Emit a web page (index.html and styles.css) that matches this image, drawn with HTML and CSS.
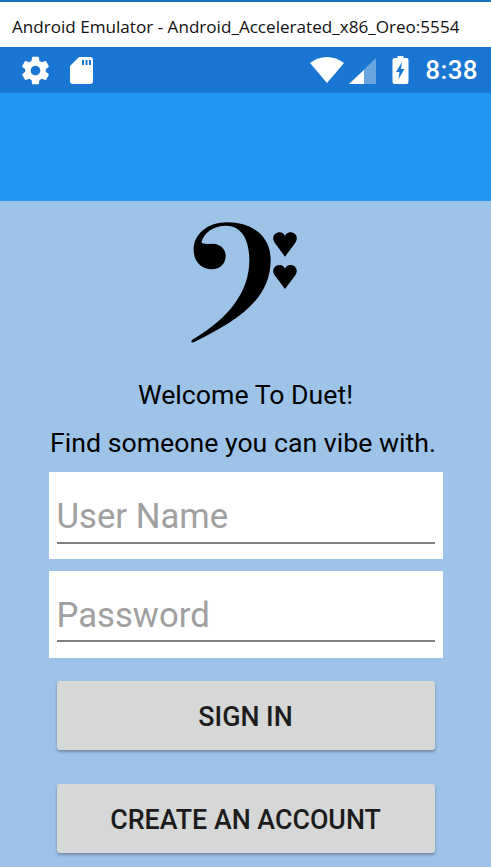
FILE: index.html
```html
<!DOCTYPE html>
<html lang="en">
<head>
<meta charset="utf-8">
<title>Duet</title>
<link rel="stylesheet" href="styles.css">
</head>
<body>
<div class="titlebar">Android Emulator - Android_Accelerated_x86_Oreo:5554</div>
<div class="statusbar">
  <svg class="ic-gear" viewBox="0 0 24 24"><path fill="#fff" d="M19.43 12.98c.04-.32.07-.64.07-.98s-.03-.66-.07-.98l2.11-1.65c.19-.15.24-.42.12-.64l-2-3.46c-.12-.22-.39-.3-.61-.22l-2.49 1c-.52-.4-1.08-.73-1.69-.98l-.38-2.65C14.46 2.18 14.25 2 14 2h-4c-.25 0-.46.18-.49.42l-.38 2.65c-.61.25-1.17.59-1.69.98l-2.49-1c-.23-.09-.49 0-.61.22l-2 3.46c-.13.22-.07.49.12.64l2.11 1.65c-.04.32-.07.65-.07.98s.03.66.07.98l-2.11 1.65c-.19.15-.24.42-.12.64l2 3.46c.12.22.39.3.61.22l2.49-1c.52.4 1.08.73 1.69.98l.38 2.65c.03.24.24.42.49.42h4c.25 0 .46-.18.49-.42l.38-2.65c.61-.25 1.17-.59 1.69-.98l2.49 1c.23.09.49 0 .61-.22l2-3.46c.12-.22.07-.49-.12-.64l-2.11-1.65zM12 15.500c-1.93 0-3.500-1.570-3.500-3.500s1.570-3.500 3.500-3.500 3.500 1.570 3.500 3.500-1.570 3.500-3.500 3.500z"/></svg>
  <svg class="ic-sd" viewBox="0 0 23 27"><path fill="#fff" fill-rule="evenodd" d="M9 0h11a3 3 0 0 1 3 3v21a3 3 0 0 1-3 3H3a3 3 0 0 1-3-3V9zM12 3v5h2V3zM15.500 3v5h2V3zM19 3v5h2V3z"/></svg>
  <span class="spacer"></span>
  <svg class="ic-wifi" viewBox="0 0 34 26"><path fill="#fff" d="M17 26 0 6C5 2 11 0 17 0s12 2 17 6z"/></svg>
  <svg class="ic-signal" viewBox="0 0 27 26"><path fill="#fff" fill-opacity=".35" d="M27 0v26H0z"/><path fill="#fff" d="M15 12v14H0z"/></svg>
  <svg class="ic-batt" viewBox="0 0 16 28"><path fill="#fff" fill-rule="evenodd" d="M5 0h6v2h3a2 2 0 0 1 2 2v22a2 2 0 0 1-2 2H2a2 2 0 0 1-2-2V4a2 2 0 0 1 2-2h3zM9.500 6 3.500 16h3.500l-1 7 6-10H8.500z"/></svg>
  <span class="clock">8:38</span>
</div>
<div class="toolbar"></div>
<main class="content">
  <svg class="logo" viewBox="0 0 450 450">
    <path d="M65 412C62 408 66 404 72 401C175 340 238 262 238 165C238 100 212 62 168 62C130 62 103 82 94 112C100 119 112 117 128 116C150 116 167 131 167 153C167 176 150 193 125 193C95 193 71 170 71 134C71 88 112 52 172 52C245 52 302 92 302 165C302 290 190 352 73 411C70 412 67 413 65 412Z"/>
    <path d="M345 155 314 113C303 97 314 82 329 82C336 82 342 86 345 93C348 86 354 82 361 82C376 82 387 97 376 113Z"/>
    <path d="M345 252 314 211C303 195 314 180 329 180C336 180 342 184 345 191C348 184 354 180 361 180C376 180 387 195 376 211Z"/>
  </svg>
  <p class="welcome">Welcome To Duet!</p>
  <p class="tagline">Find someone you can vibe with.</p>
  <div class="field"><span class="placeholder">User Name</span></div>
  <div class="field"><span class="placeholder placeholder-tight">Password</span></div>
  <button class="btn btn-first" type="button">SIGN IN</button>
  <button class="btn" type="button">CREATE AN ACCOUNT</button>
</main>
</body>
</html>
```
FILE: styles.css
```css
html, body {
  margin: 0;
  padding: 0;
  height: 867px;
  overflow: hidden;
  background: #9dc3e8;
  font-family: Roboto, sans-serif;
}
.titlebar {
  box-sizing: border-box;
  height: 47px;
  padding: 16px 0 0 12px;
  background: #fff;
  border-top: 2px solid #1c6fb5;
  color: #111;
  font-family: "Open Sans", sans-serif;
  font-size: 17.100px;
  line-height: 18px;
  white-space: nowrap;
}
.statusbar {
  display: flex;
  align-items: center;
  height: 46px;
  background: #1976d2;
  color: #fff;
}
.spacer { flex: 1; }
.ic-gear { width: 33px; height: 33px; margin-left: 19px; }
.ic-sd { width: 23px; height: 27px; margin-left: 18px; }
.ic-wifi { width: 34px; height: 26px; margin-top: -1px; }
.ic-signal { width: 27px; height: 26px; margin: 0 0 -1px 5px; }
.ic-batt { width: 17px; height: 28px; margin-left: 16px; }
.clock { margin: 0 13px 0 16px; font-size: 26px; font-weight: 500; letter-spacing: .4px; }
.toolbar { height: 108px; background: #2196f3; }
.content {
  display: flex;
  flex-direction: column;
  align-items: center;
}
.logo { width: 150px; height: 150px; margin: 4px 1px 0 0; display: block; }
.welcome, .tagline {
  margin: 0;
  color: #000;
  font-size: 26.700px;
  line-height: 30px;
}
.welcome { margin-top: 25px; }
.tagline { margin: 18px 5px 0 0; }
.field {
  box-sizing: border-box;
  width: 394px;
  height: 87px;
  margin-top: 12px;
  padding: 24px 8px 0;
  background: #fff;
}
.tagline + .field { margin-top: 14px; }
.placeholder {
  display: block;
  height: 46px;
  border-bottom: 2px solid #7f7f7f;
  color: #a0a0a0;
  font-size: 34.700px;
  line-height: 40px;
}
.placeholder-tight { height: 45px; }
.btn {
  width: 378px;
  height: 69px;
  margin-top: 34px;
  padding-top: 4px;
  border: 0;
  border-radius: 3px;
  background: #d6d7d7;
  box-shadow: 0 2px 3px rgba(0, 0, 0, .3);
  color: #1c1c1c;
  font-family: Roboto, sans-serif;
  font-size: 26.800px;
  font-weight: 500;
}
.btn-first { margin-top: 23px; }
```
